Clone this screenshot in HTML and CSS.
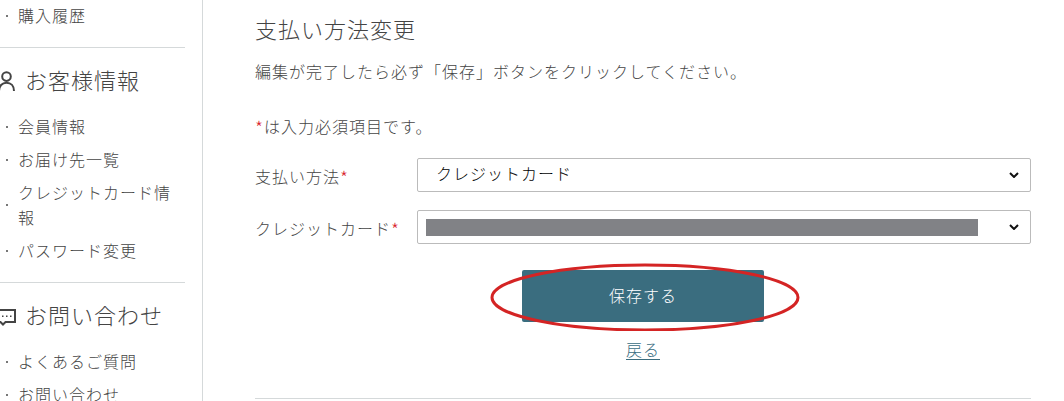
FILE: index.html
```html
<!DOCTYPE html>
<html lang="ja">
<head>
  <meta charset="UTF-8">
  <title>支払い方法変更</title>
  <link rel="stylesheet" href="styles.css">
</head>
<body>
  <div class="page">
    <!-- Left menu -->
    <nav class="sidebar">
      <div class="menu-section">
        <ul class="menu-list">
          <li><a href="#">購入履歴</a></li>
        </ul>
      </div>

      <div class="menu-section">
        <h2 class="menu-title">
          <svg class="menu-icon" viewBox="0 -3 24 24">
            <circle cx="14.5" cy="6.6" r="4.3"/>
            <path d="M7 21c0-5 3-8.3 7.5-8.3S22 16 22 21"/>
          </svg>
          お客様情報
        </h2>
        <ul class="menu-list">
          <li><a href="#">会員情報</a></li>
          <li><a href="#">お届け先一覧</a></li>
          <li><a href="#">クレジットカード情報</a></li>
          <li><a href="#">パスワード変更</a></li>
        </ul>
      </div>

      <div class="menu-section">
        <h2 class="menu-title">
          <svg class="menu-icon" viewBox="0 -3 24 24">
            <path d="M3 5h20v12H13.500l-2.500 2.500-2.500-2.500H3z"/>
            <path class="dots" d="M10 10.500h1.500v1.500h-1.500zM14 10.500h1.500v1.500h-1.500zM18 10.500h1.500v1.500h-1.500z"/>
          </svg>
          お問い合わせ
        </h2>
        <ul class="menu-list">
          <li><a href="#">よくあるご質問</a></li>
          <li><a href="#">お問い合わせ</a></li>
        </ul>
      </div>
    </nav>

    <!-- Main content -->
    <main class="content">
      <h1>支払い方法変更</h1>
      <p class="lead">編集が完了したら必ず「保存」ボタンをクリックしてください。</p>
      <p class="note"><span class="required">*</span>は入力必須項目です。</p>

      <form class="payment-form">
        <div class="form-row">
          <label for="method">支払い方法<span class="required">*</span></label>
          <div class="select-box">
            <select id="method">
              <option>クレジットカード</option>
            </select>
            <svg class="arrow" viewBox="0 0 10 6"><path d="M1 1l4 4 4-4"/></svg>
          </div>
        </div>
        <div class="form-row">
          <label for="card">クレジットカード<span class="required">*</span></label>
          <div class="select-box">
            <select id="card">
              <option></option>
            </select>
            <span class="mask"></span>
            <svg class="arrow" viewBox="0 0 10 6"><path d="M1 1l4 4 4-4"/></svg>
          </div>
        </div>

        <div class="actions">
          <div class="save-area">
            <button type="submit" class="save-button">保存する</button>
            <svg class="save-mark" viewBox="0 0 310 68"><ellipse cx="155" cy="34.500" rx="153" ry="32.500"/></svg>
          </div>
          <a href="#" class="back-link">戻る</a>
        </div>
      </form>
    </main>
  </div>
</body>
</html>
```

FILE: styles.css
```css
* {
  box-sizing: border-box;
}

body {
  margin: 0;
  background: #fff;
  color: #444;
  font-family: "Noto Sans CJK JP", sans-serif;
  font-size: 16px;
  font-weight: 300;
  line-height: 26px;
  letter-spacing: 1px;
  overflow: hidden;
}

h1, h2, p, ul {
  margin: 0;
  padding: 0;
}

h1, h2 {
  font-size: 22px;
  font-weight: 300;
  line-height: 32px;
}

.page {
  display: flex;
  height: 100vh;
}

/* Left menu */
.sidebar {
  flex: 0 0 203px;
  padding: 3px 14px 0 0;
  border-right: 1px solid #d5d9da;
  overflow: hidden;
}

.menu-section {
  margin-right: 3px;
  padding-bottom: 19px;
}

.menu-section + .menu-section {
  padding-top: 15px;
  border-top: 1px solid #d5d9da;
}

.menu-title {
  display: flex;
  align-items: center;
  gap: 9px;
  margin-bottom: 19px;
}

.menu-icon {
  flex: none;
  width: 24px;
  height: 24px;
  margin-left: -8px;
  fill: none;
  stroke: #444;
  stroke-width: 2;
  overflow: visible;
}

.menu-icon .dots {
  fill: #444;
  stroke: none;
}

.menu-list {
  display: flex;
  flex-direction: column;
  gap: 8px;
  list-style: none;
  line-height: 25px;
}

.menu-list li {
  display: flex;
  align-items: center;
}

.menu-list li::before {
  content: "";
  flex: none;
  width: 2px;
  height: 2px;
  margin: 0 10px 0 6px;
  background: #777;
}

.menu-list a {
  color: inherit;
  text-decoration: none;
}

/* Main content */
.content {
  flex: 1;
  padding: 12px 33px 0 52px;
}

.lead {
  margin-top: 14px;
}

.note {
  margin-top: 29px;
}

.required {
  color: #d8232a;
  font-size: 18px;
  line-height: 18px;
  vertical-align: -2px;
}

.payment-form {
  display: flex;
  flex-direction: column;
  gap: 18px;
  margin-top: 19px;
  padding-bottom: 36px;
  border-bottom: 1px solid #d5d9da;
}

.form-row {
  display: flex;
  align-items: center;
}

.form-row label {
  flex: 0 0 162px;
  padding-top: 2px;
  white-space: nowrap;
}

.select-box {
  flex: 1;
  display: flex;
  position: relative;
}

.select-box select {
  width: 100%;
  height: 34px;
  padding: 0 40px 5px 18px;
  border: 1px solid #bbb;
  border-radius: 2px;
  appearance: none;
  background: #fff;
  color: #000;
  font: inherit;
  letter-spacing: inherit;
}

.arrow {
  position: absolute;
  top: 14px;
  right: 12px;
  width: 10px;
  height: 6px;
  fill: none;
  stroke: #111;
  stroke-width: 2;
  pointer-events: none;
}

.mask {
  position: absolute;
  top: 9px;
  left: 9px;
  right: 53px;
  height: 17px;
  background: #818286;
}

.actions {
  display: flex;
  flex-direction: column;
  align-items: center;
  gap: 14px;
  margin-top: 8px;
}

.save-area {
  display: flex;
  position: relative;
}

.save-button {
  width: 242px;
  height: 52px;
  padding-bottom: 3px;
  border: none;
  border-radius: 2px;
  background: #3a6d7f;
  color: #fff;
  font: inherit;
  letter-spacing: inherit;
  cursor: pointer;
}

/* Red ring around the save button */
.save-mark {
  position: absolute;
  top: -7px;
  left: -32px;
  width: 310px;
  height: 68px;
  fill: none;
  stroke: #d42424;
  stroke-width: 3;
  pointer-events: none;
}

.back-link {
  color: #3a6d7f;
  text-underline-offset: 3px;
}
```
